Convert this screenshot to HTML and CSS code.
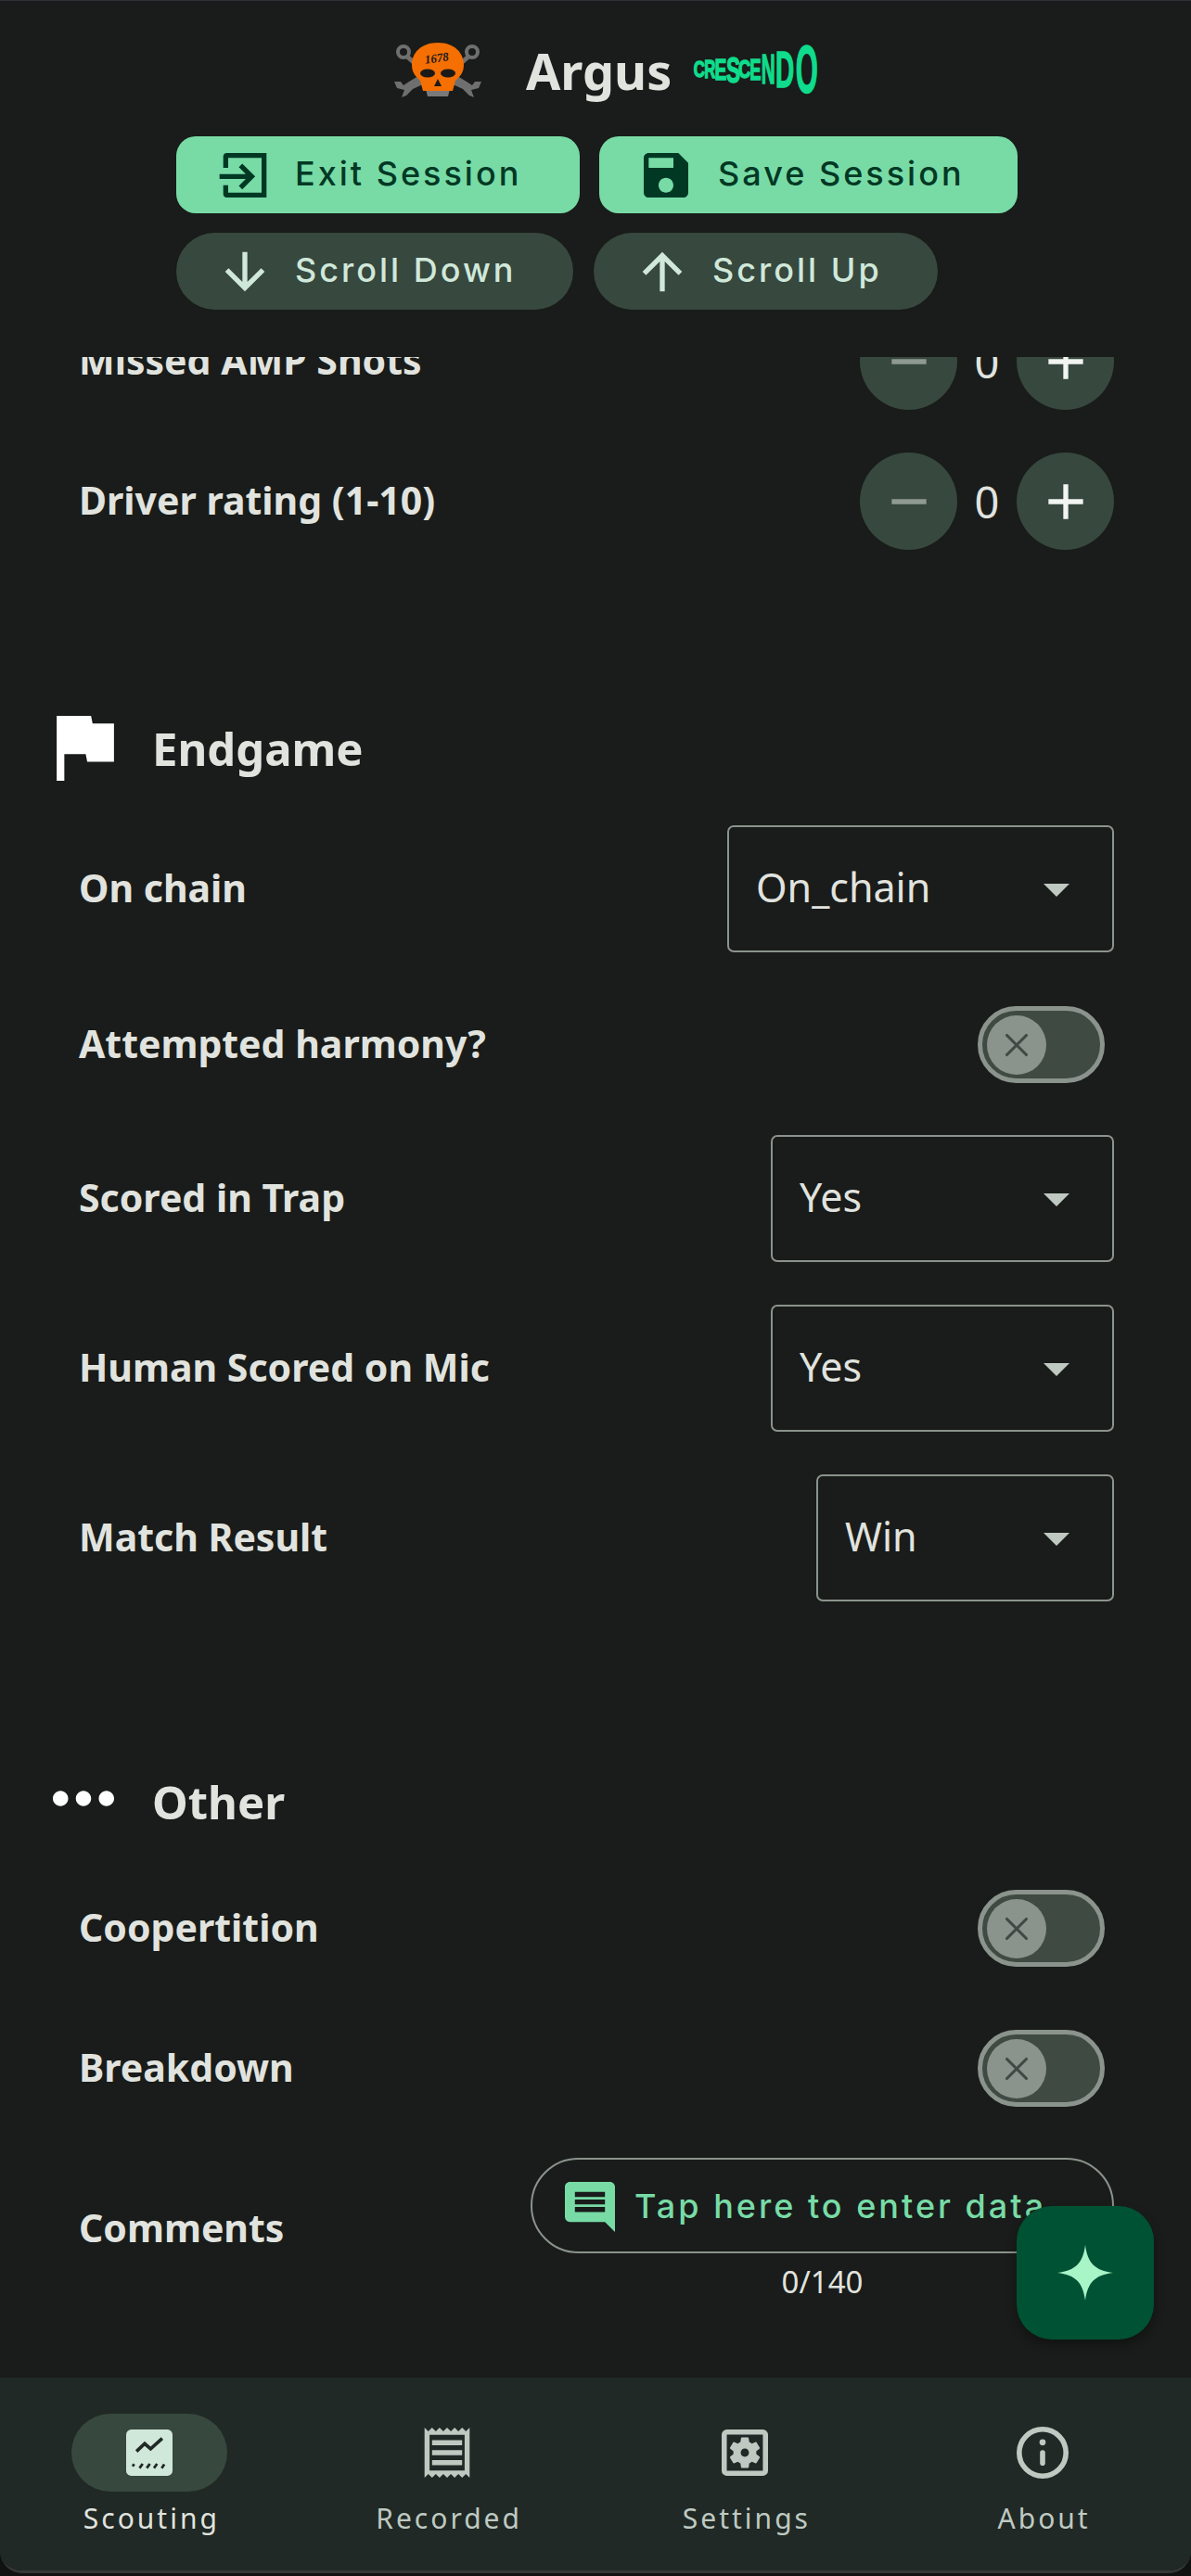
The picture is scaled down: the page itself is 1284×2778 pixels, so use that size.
FILE: index.html
```html
<!DOCTYPE html>
<html lang="en">
<head>
    <meta charset="UTF-8">
    <meta name="viewport" content="width=device-width, initial-scale=1.0">
    <title>Argus</title>
    <link rel="stylesheet" href="styles.css">
</head>
<body>
    <div class="page">
        <header class="header">
            <svg class="skull" viewBox="0 0 94 60">
                <g fill="none" stroke="#6f6f6f" stroke-width="4">
                    <circle cx="10" cy="10" r="6"></circle>
                    <circle cx="84" cy="10" r="6"></circle>
                </g>
                <path d="M14 15 L24 24 M80 15 L70 24" stroke="#6f6f6f" stroke-width="5"></path>
                <path d="M0 42 L7 42 L10 46 L16 42 L26 36 L33 44 L20 50 L13 57 L8 59 L11 51 L3 49 Z" fill="#6f6f6f"></path>
                <path d="M94 42 L87 42 L84 46 L78 42 L68 36 L61 44 L74 50 L81 57 L86 59 L83 51 L91 49 Z" fill="#6f6f6f"></path>
                <path d="M34 50 H60 L58 58 H36 Z" fill="#7a7a7a"></path>
                <path d="M47 0 C65 0 75 11 75 24 C75 33 70 37 66 41 L63 52 H31 L28 41 C24 37 19 33 19 24 C19 11 29 0 47 0 Z" fill="#f56f02"></path>
                <ellipse cx="36" cy="33" rx="8" ry="4.5" fill="#1c1a18"></ellipse>
                <ellipse cx="58" cy="33" rx="8" ry="4.5" fill="#1c1a18"></ellipse>
                <path d="M47 39 L51 47 H43 Z" fill="#1c1a18"></path>
                <text class="skull-num" x="46" y="21" transform="rotate(-8 46 18)">1678</text>
            </svg>
            <span class="title">Argus</span>
            <div class="season">
                <span class="s1">C</span><span class="s2">R</span><span class="s3">E</span><span class="s4">S</span><span class="s5">C</span><span class="s6">E</span><span class="s7">N</span><span class="s8">D</span><span class="s9">O</span>
            </div>
        </header>

        <div class="actions">
            <div class="btn btn-primary btn-exit">
                <svg class="btn-icon" viewBox="0 0 24 24" fill="none" stroke="currentColor" stroke-width="2"><path d="M5 9V4.5A.5.5 0 0 1 5.500 4H20.500V20H5.500A.5.5 0 0 1 5 19.500V16"></path><path d="M2.500 12.500H15M11 8l4.500 4.500L11 17"></path></svg>
                <span>Exit Session</span>
            </div>
            <div class="btn btn-primary btn-save">
                <svg class="btn-icon" viewBox="0 0 24 24" fill="currentColor"><path d="M17 3H5c-1.110 0-2 .9-2 2v14c0 1.100.89 2 2 2h14c1.100 0 2-.9 2-2V7l-4-4zm-5 16c-1.660 0-3-1.340-3-3s1.340-3 3-3 3 1.340 3 3-1.340 3-3 3zm3-10H5V5h10v4z"></path></svg>
                <span>Save Session</span>
            </div>
            <div class="btn btn-tonal btn-down">
                <svg class="btn-icon" viewBox="0 0 24 24" fill="currentColor"><path d="M20 12l-1.410-1.410L13 16.170V4h-2v12.170l-5.580-5.590L4 12l8 8 8-8z"></path></svg>
                <span>Scroll Down</span>
            </div>
            <div class="btn btn-tonal btn-up">
                <svg class="btn-icon" viewBox="0 0 24 24" fill="currentColor"><path d="M4 12l1.410 1.410L11 7.830V20h2V7.830l5.580 5.590L20 12l-8-8-8 8z"></path></svg>
                <span>Scroll Up</span>
            </div>
        </div>

        <main class="scroll">
            <div class="scroll-inner">
                <div class="row row-stepper">
                    <span class="label">Missed AMP Shots</span>
                    <div class="stepper">
                        <div class="step"><svg viewBox="0 0 24 24" class="step-minus"><path d="M19 13H5v-2h14v2z"></path></svg></div>
                        <span class="step-value">0</span>
                        <div class="step"><svg viewBox="0 0 24 24" class="step-plus"><path d="M19 13h-6v6h-2v-6H5v-2h6V5h2v6h6v2z"></path></svg></div>
                    </div>
                </div>
                <div class="row row-stepper">
                    <span class="label">Driver rating (1-10)</span>
                    <div class="stepper">
                        <div class="step"><svg viewBox="0 0 24 24" class="step-minus"><path d="M19 13H5v-2h14v2z"></path></svg></div>
                        <span class="step-value">0</span>
                        <div class="step"><svg viewBox="0 0 24 24" class="step-plus"><path d="M19 13h-6v6h-2v-6H5v-2h6V5h2v6h6v2z"></path></svg></div>
                    </div>
                </div>

                <h2 class="section">
                    <svg class="section-flag" viewBox="5 4 15 17"><path d="M14.400 6L14 4H5v17h2v-7h5.600l.4 2h7V6z"></path></svg>
                    <span>Endgame</span>
                </h2>
                <div class="row row-select">
                    <span class="label">On chain</span>
                    <div class="select select-wide"><span>On_chain</span><i class="caret"></i></div>
                </div>
                <div class="row row-switch">
                    <span class="label">Attempted harmony?</span>
                    <div class="switch"><div class="thumb"><svg viewBox="0 0 24 24"><path d="M6 6l12 12M18 6L6 18"></path></svg></div></div>
                </div>
                <div class="row row-select">
                    <span class="label">Scored in Trap</span>
                    <div class="select select-mid"><span>Yes</span><i class="caret"></i></div>
                </div>
                <div class="row row-select">
                    <span class="label">Human Scored on Mic</span>
                    <div class="select select-mid"><span>Yes</span><i class="caret"></i></div>
                </div>
                <div class="row row-select">
                    <span class="label">Match Result</span>
                    <div class="select select-small"><span>Win</span><i class="caret"></i></div>
                </div>

                <h2 class="section">
                    <svg class="section-dots" viewBox="4 10 16 4"><path d="M6 10c-1.100 0-2 .9-2 2s.9 2 2 2 2-.9 2-2-.9-2-2-2zm12 0c-1.100 0-2 .9-2 2s.9 2 2 2 2-.9 2-2-.9-2-2-2zm-6 0c-1.100 0-2 .9-2 2s.9 2 2 2 2-.9 2-2-.9-2-2-2z"></path></svg>
                    <span>Other</span>
                </h2>
                <div class="row row-switch">
                    <span class="label">Coopertition</span>
                    <div class="switch"><div class="thumb"><svg viewBox="0 0 24 24"><path d="M6 6l12 12M18 6L6 18"></path></svg></div></div>
                </div>
                <div class="row row-switch">
                    <span class="label">Breakdown</span>
                    <div class="switch"><div class="thumb"><svg viewBox="0 0 24 24"><path d="M6 6l12 12M18 6L6 18"></path></svg></div></div>
                </div>
                <div class="row row-field">
                    <span class="label">Comments</span>
                    <div class="field-wrap">
                        <div class="field">
                            <svg class="field-icon" viewBox="2 2 20 20"><path d="M21.990 4c0-1.100-.89-2-1.990-2H4c-1.100 0-2 .9-2 2v12c0 1.100.9 2 2 2h14l4 4-.01-18zM18 14H6v-2h12v2zm0-3H6V9h12v2zm0-3H6V6h12v2z"></path></svg>
                            <span>Tap here to enter data</span>
                        </div>
                        <div class="helper">0/140</div>
                    </div>
                </div>
            </div>
        </main>

        <nav class="nav">
            <div class="nav-item nav-item-active">
                <div class="nav-pill">
                    <svg class="nav-icon" viewBox="3 3 18 18">
                        <rect x="3" y="3" width="18" height="18" rx="2" fill="currentColor"></rect>
                        <path d="M7 11.500l3.200-3 2.300 2L17 6.500" fill="none" stroke="#202925" stroke-width="1.300"></path>
                        <path d="M5.500 17.300l.6-.9M8.200 18l1.200-1.700M11 18l1.200-1.700M13.800 18l1.200-1.700M16.800 18l1-1.500" fill="none" stroke="#202925" stroke-width="1"></path>
                    </svg>
                </div>
                <span class="nav-label">Scouting</span>
            </div>
            <div class="nav-item">
                <div class="nav-pill">
                    <svg class="nav-icon nav-icon-tall" viewBox="3 2 18 20" fill="currentColor"><path d="M19.500 3.500L18 2l-1.500 1.500L15 2l-1.500 1.500L12 2l-1.500 1.500L9 2 7.500 3.500 6 2 4.500 3.500 3 2v20l1.500-1.500L6 22l1.500-1.500L9 22l1.500-1.500L12 22l1.500-1.500L15 22l1.500-1.500L18 22l1.500-1.500L21 22V2l-1.500 1.500zM19 19.090H5V4.910h14v14.180zM6 15h12v2H6zm0-4h12v2H6zm0-4h12v2H6z"></path></svg>
                </div>
                <span class="nav-label">Recorded</span>
            </div>
            <div class="nav-item">
                <div class="nav-pill">
                    <svg class="nav-icon" viewBox="3 3 18 18">
                        <rect x="4" y="4" width="16" height="16" rx="1" fill="none" stroke="currentColor" stroke-width="2"></rect>
                        <path fill="currentColor" transform="translate(12 12) scale(.62) translate(-12 -12)" d="M19.140 12.940c.04-.3.06-.61.06-.94 0-.32-.02-.64-.07-.94l2.030-1.580c.18-.14.23-.41.12-.61l-1.920-3.320c-.12-.22-.37-.29-.59-.22l-2.390.96c-.5-.38-1.030-.7-1.620-.94l-.36-2.540c-.04-.24-.24-.41-.48-.41h-3.840c-.24 0-.43.17-.47.41l-.36 2.540c-.59.24-1.130.57-1.620.94l-2.390-.96c-.22-.08-.47 0-.59.22L2.740 8.870c-.12.21-.08.47.12.61l2.030 1.580c-.05.3-.07.63-.07.94s.02.64.07.94l-2.030 1.580c-.18.14-.23.41-.12.61l1.920 3.320c.12.22.37.29.59.22l2.390-.96c.5.38 1.030.7 1.620.94l.36 2.540c.05.24.24.41.48.41h3.840c.24 0 .44-.17.47-.41l.36-2.540c.59-.24 1.130-.56 1.620-.94l2.390.96c.22.08.47 0 .59-.22l1.920-3.320c.12-.22.07-.47-.12-.61l-2.010-1.580zM12 14.600c-1.430 0-2.600-1.170-2.600-2.600s1.170-2.600 2.600-2.600 2.600 1.170 2.600 2.600-1.170 2.600-2.600 2.600z"></path>
                    </svg>
                </div>
                <span class="nav-label">Settings</span>
            </div>
            <div class="nav-item">
                <div class="nav-pill">
                    <svg class="nav-icon nav-icon-info" viewBox="2 2 20 20">
                        <circle cx="12" cy="12" r="9" fill="none" stroke="currentColor" stroke-width="2"></circle>
                        <circle cx="12" cy="8" r="1.200" fill="currentColor"></circle>
                        <rect x="11" y="11" width="2" height="6" rx="1" fill="currentColor"></rect>
                    </svg>
                </div>
                <span class="nav-label">About</span>
            </div>
        </nav>

        <div class="fab">
            <svg viewBox="2 2 20 20"><path d="M12 2C12.800 8.500 15.500 11.200 22 12 15.500 12.800 12.800 15.500 12 22 11.200 15.500 8.500 12.800 2 12 8.500 11.200 11.200 8.500 12 2z"></path></svg>
        </div>
    </div>
</body>
</html>
```

FILE: styles.css
```css
body {
    margin: 0;
    background-color: #101211;
    font-family: "Noto Sans", sans-serif;
    color: #e1e3df;
}
.page {
    position: relative;
    display: flex;
    flex-direction: column;
    height: 2775px;
    background-color: #191c1a;
    border-top: 1px solid #2a3034;
    border-bottom: 3px solid #343836;
    border-radius: 0 0 24px 24px;
    box-sizing: border-box;
    overflow: hidden;
}

/* header */
.header {
    display: flex;
    align-items: center;
    height: 146px;
    padding: 0 0 0 425px;
    box-sizing: border-box;
}
.skull {
    width: 94px;
    height: 60px;
    margin-top: 4px;
}
.skull-num {
    font-family: "Liberation Serif", serif;
    font-size: 13px;
    font-weight: 700;
    font-style: italic;
    text-anchor: middle;
    fill: #1c1a18;
}
.title {
    margin: 4px 0 0 48px;
    font-size: 54px;
    font-weight: 700;
    line-height: 70px;
    color: #e1e3df;
}
.season {
    display: flex;
    align-items: center;
    height: 54px;
    margin: 2px 0 0 22px;
    font-family: "Liberation Sans", sans-serif;
    font-weight: 700;
    color: #0fdc8c;
    -webkit-text-stroke: 1.5px #0fdc8c;
}
.season span {
    display: block;
    line-height: 1;
    text-align: center;
}
.s1 { width: 11px; font-size: 24px; transform: scaleX(.7); }
.s2 { width: 11px; font-size: 28px; transform: scaleX(.6); }
.s3 { width: 12px; font-size: 32px; transform: scaleX(.6); }
.s4 { width: 14px; font-size: 39px; transform: scaleX(.58); }
.s5 { width: 12px; font-size: 28px; transform: scaleX(.65); }
.s6 { width: 11px; font-size: 32px; transform: scaleX(.57); }
.s7 { width: 14px; font-size: 44px; transform: scaleX(.47); }
.s8 { width: 20px; font-size: 56px; transform: scaleX(.5); }
.s9 { width: 24px; font-size: 72px; transform: scaleX(.43); }

/* session buttons */
.actions {
    display: flex;
    flex-wrap: wrap;
    gap: 21px;
    height: 238px;
    padding-left: 190px;
    align-content: flex-start;
    box-sizing: border-box;
}
.btn {
    display: flex;
    align-items: center;
    gap: 24px;
    height: 83px;
    padding-left: 40px;
    box-sizing: border-box;
    font-family: "Inter", sans-serif;
    font-size: 36px;
    font-weight: 500;
    letter-spacing: 3px;
}
.btn span {
    margin-top: -3px;
}
.btn-icon {
    width: 64px;
    height: 64px;
    flex-shrink: 0;
}
.btn-primary {
    background-color: #78dba6;
    color: #003824;
    border-radius: 21px;
}
.btn-tonal {
    gap: 22px;
    padding-left: 42px;
    background-color: #37483e;
    color: #d0e8da;
    border-radius: 42px;
}
.btn-exit { width: 435px; }
.btn-save { width: 451px; }
.btn-down { width: 428px; }
.btn-up { width: 371px; }
.actions .btn-down { margin-right: 1px; }

/* scrolling form */
.scroll {
    flex: 1;
    min-height: 0;
    overflow: hidden;
}
.scroll-inner {
    margin-top: -48px;
    padding: 0 83px 0 85px;
}
.row {
    display: flex;
    align-items: center;
    justify-content: space-between;
}
.label {
    margin-top: -4px;
    font-size: 41px;
    font-weight: 700;
    color: #e1e3df;
}
.row-stepper { height: 105px; }
.row-stepper + .row-stepper { margin-top: 46px; }
.stepper {
    display: flex;
    align-items: center;
}
.step {
    display: flex;
    align-items: center;
    justify-content: center;
    width: 105px;
    height: 105px;
    border-radius: 50%;
    background-color: #37483e;
}
.step svg {
    width: 64px;
    height: 64px;
}
.step-minus { fill: #8f9a93; }
.step-plus { fill: #f1f4f0; }
.step-value {
    width: 64px;
    text-align: center;
    font-size: 47px;
    color: #e1e3df;
}

.section {
    display: flex;
    align-items: center;
    gap: 41px;
    height: 70px;
    margin: 179px 0 0 -24px;
    font-size: 49px;
    font-weight: 700;
    color: #e1e3df;
}
.row-select + .section { margin-top: 181px; }
.section-flag {
    width: 62px;
    height: 70px;
    fill: #fff;
}
.section-dots {
    width: 66px;
    height: 17px;
    margin: -8px 0 0 -4px;
    fill: #fff;
}

.row-select { margin-top: 46px; }
.row-switch { margin-top: 58px; height: 83px; }
.row-switch + .row-select { margin-top: 56px; }
.section + .row-select { margin-top: 48px; }
.section + .row-switch { margin-top: 60px; }
.row-switch + .row-switch { margin-top: 68px; }
.select {
    display: flex;
    align-items: center;
    justify-content: space-between;
    height: 137px;
    padding: 0 46px 0 29px;
    box-sizing: border-box;
    border: 2px solid #8a938c;
    border-radius: 7px;
    font-size: 43px;
    color: #e1e3df;
}
.select span {
    margin-top: -4px;
}
.select-wide { width: 417px; }
.select-mid { width: 370px; }
.select-small { width: 321px; }
.caret {
    width: 0;
    height: 0;
    margin-top: 2px;
    border-left: 14px solid transparent;
    border-right: 14px solid transparent;
    border-top: 14px solid #bfc9c2;
}

.switch {
    display: flex;
    align-items: center;
    width: 137px;
    height: 83px;
    margin-right: 10px;
    padding-left: 7px;
    box-sizing: border-box;
    border: 5px solid #8a938c;
    border-radius: 42px;
    background-color: #3f4a43;
}
.thumb {
    display: flex;
    align-items: center;
    justify-content: center;
    width: 64px;
    height: 64px;
    margin-left: -2px;
    border-radius: 50%;
    background-color: #8a938c;
}
.thumb svg {
    width: 42px;
    height: 42px;
    fill: none;
    stroke: #3f4a43;
    stroke-width: 1.800;
    stroke-linecap: round;
}

.row-field { margin-top: 55px; }
.field-wrap {
    width: 629px;
}
.field {
    display: flex;
    align-items: center;
    gap: 21px;
    height: 103px;
    padding-left: 35px;
    box-sizing: border-box;
    border: 2px solid #8a938c;
    border-radius: 52px;
    font-family: "Inter", sans-serif;
    font-size: 36px;
    font-weight: 500;
    letter-spacing: 3px;
    color: #78dba6;
    white-space: nowrap;
    overflow: hidden;
}
.field-icon {
    width: 54px;
    height: 54px;
    margin-top: 3px;
    fill: #78dba6;
    flex-shrink: 0;
}
.helper {
    margin-top: 12px;
    text-align: center;
    font-size: 33px;
    line-height: 38px;
    color: #e1e3df;
}

/* bottom navigation */
.nav {
    display: grid;
    grid-template-columns: repeat(4, 1fr);
    flex-shrink: 0;
    height: 208px;
    padding: 39px 0 0 1px;
    box-sizing: border-box;
    background-color: #202925;
}
.nav-item {
    display: flex;
    flex-direction: column;
    align-items: center;
    font-size: 30px;
    line-height: 44px;
    letter-spacing: 3px;
    color: #bfc9c2;
}
.nav-label {
    padding-left: 4px;
}
.nav-pill {
    display: flex;
    align-items: center;
    justify-content: center;
    width: 168px;
    height: 84px;
    margin-bottom: 7px;
    border-radius: 42px;
}
.nav-item-active {
    color: #e1e3df;
}
.nav-item-active .nav-pill {
    background-color: #37483e;
}
.nav-item-active .nav-icon {
    color: #d0e8da;
}
.nav-icon {
    width: 50px;
    height: 50px;
}
.nav-icon-tall {
    height: 54px;
}
.nav-icon-info {
    width: 56px;
    height: 56px;
}

.fab {
    position: absolute;
    left: 1096px;
    top: 2378px;
    display: flex;
    align-items: center;
    justify-content: center;
    width: 148px;
    height: 144px;
    border-radius: 38px;
    background-color: #005234;
    box-shadow: 0 6px 12px rgba(0, 0, 0, .3);
}
.fab svg {
    width: 60px;
    height: 60px;
    fill: #a8f5c8;
}
```
